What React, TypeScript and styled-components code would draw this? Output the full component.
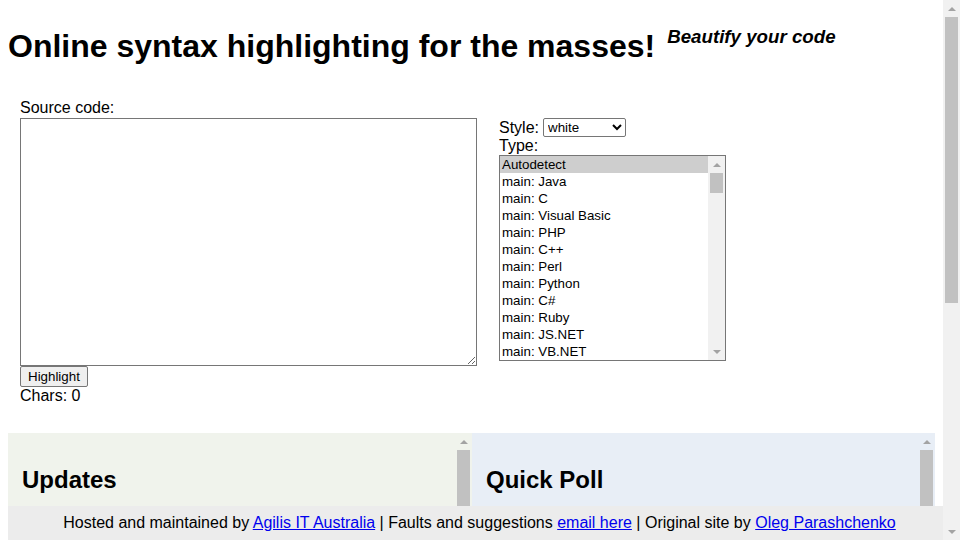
import React, { useState } from "react";
import styled, { createGlobalStyle } from "styled-components";

const GlobalStyle = createGlobalStyle`
  body {
    margin: 8px;
    background: #ffffff;
    color: #000000;
    font-family: "Liberation Sans", Arial, sans-serif;
    font-size: 16px;
  }
`;

// scrollbar parts, drawn by hand since the browser hides its own
const ScrollTrack = styled.div<{ $bg?: string }>`
  display: flex;
  flex-direction: column;
  flex: 0 0 17px;
  width: 17px;
  background: ${(p) => p.$bg || "#f1f1f1"};
`;

const ArrowButton = styled.div`
  flex: 0 0 17px;
  display: flex;
  align-items: center;
  justify-content: center;
`;

const Arrow = styled.span<{ $down?: boolean }>`
  width: 0;
  height: 0;
  border-left: 4px solid transparent;
  border-right: 4px solid transparent;
  ${(p) =>
    p.$down
      ? "border-top: 4px solid #a3a3a3;"
      : "border-bottom: 4px solid #a3a3a3;"}
`;

const Thumb = styled.div<{ $size: number }>`
  flex: 0 0 ${(p) => p.$size}px;
  margin: 0 2px;
  background: #c1c1c1;
`;

const TrackGap = styled.div`
  flex: 1;
`;

const PageScrollbar = styled(ScrollTrack)`
  position: fixed;
  top: 0;
  right: 0;
  bottom: 0;
  z-index: 2;
`;

const Scrollbar: React.FC<{ thumb: number; bg?: string }> = ({ thumb, bg }) => (
  <ScrollTrack $bg={bg}>
    <ArrowButton>
      <Arrow />
    </ArrowButton>
    <Thumb $size={thumb} />
    <TrackGap />
    <ArrowButton>
      <Arrow $down />
    </ArrowButton>
  </ScrollTrack>
);

const Header = styled.div`
  display: flex;
  align-items: flex-start;
  gap: 12px;
`;

const Title = styled.h1`
  font-size: 32px;
  font-weight: bold;
  margin: 20px 0 21px;
  white-space: nowrap;
`;

const Tagline = styled.h3`
  font-size: 18.72px;
  font-style: italic;
  font-weight: bold;
  margin: 18px 0;
`;

const Main = styled.div`
  display: flex;
  align-items: flex-start;
  gap: 22px;
  padding: 13px 0 0 12px;
`;

const SourceColumn = styled.div`
  display: flex;
  flex-direction: column;
`;

const Label = styled.span`
  line-height: 18px;
`;

const CodeArea = styled.textarea`
  display: block;
  box-sizing: border-box;
  width: 457px;
  height: 248px;
  margin: 1px 0 0;
  border: 1px solid #767676;
  border-radius: 0;
  font-family: "Liberation Mono", monospace;
  font-size: 13px;
`;

const HighlightButton = styled.button`
  align-self: flex-start;
  height: 21px;
  padding: 0 7px;
  margin: 0;
  font-family: "Liberation Sans", Arial, sans-serif;
  font-size: 13.33px;
  color: #000000;
  background: #efefef;
  border: 1px solid #767676;
  border-radius: 2px;
`;

const OptionsColumn = styled.div`
  display: flex;
  flex-direction: column;
  margin-top: 19px;
`;

const StyleRow = styled.div`
  display: flex;
  align-items: center;
  gap: 4px;
  height: 19px;
`;

const StyleSelect = styled.select`
  width: 83px;
  height: 19px;
  padding: 0;
  font-family: "Liberation Sans", Arial, sans-serif;
  font-size: 13.33px;
  color: #000000;
  background: #ffffff;
  border: 1px solid #767676;
  border-radius: 2px;
`;

const TypeList = styled.div`
  display: flex;
  width: 227px;
  height: 206px;
  box-sizing: border-box;
  border: 1px solid #767676;
  background: #ffffff;
`;

const TypeOptions = styled.div`
  flex: 1;
  overflow: hidden;
`;

const TypeOption = styled.div<{ $selected?: boolean }>`
  height: 17px;
  line-height: 17px;
  padding: 0 2px;
  font-size: 13.33px;
  white-space: nowrap;
  cursor: default;
  background: ${(p) => (p.$selected ? "#cecece" : "transparent")};
`;

const Panels = styled.div`
  display: grid;
  grid-template-columns: 464px 463px;
  margin-top: 28px;
`;

const Panel = styled.div<{ $tint: string }>`
  display: flex;
  height: 500px;
  overflow: hidden;
  background: ${(p) => p.$tint};
`;

const PanelBody = styled.div`
  flex: 1;
  padding: 13px 14px;
`;

const PanelTitle = styled.h2`
  font-size: 24px;
  margin: 20px 0;
`;

const Footer = styled.div`
  position: fixed;
  left: 8px;
  right: 17px;
  bottom: 0;
  height: 34px;
  line-height: 34px;
  padding-left: 8px;
  text-align: center;
  background: #ececec;
  z-index: 1;

  a {
    color: #0000ee;
  }
`;

const mainTypes = [
  "Java", "C", "Visual Basic", "PHP", "C++", "Perl", "Python", "C#", "Ruby",
  "JS.NET", "VB.NET",
];

const styles = ["white", "dark", "blue", "green", "print"];

const App: React.FC = () => {
  const [source, setSource] = useState("");
  const [type, setType] = useState("Autodetect");

  const types = ["Autodetect", ...mainTypes.map((t) => "main: " + t)];

  return (
    <>
      <GlobalStyle />
      <Header>
        <Title>Online syntax highlighting for the masses!</Title>
        <Tagline>Beautify your code</Tagline>
      </Header>

      <Main>
        <SourceColumn>
          <Label>Source code:</Label>
          <CodeArea
            value={source}
            onChange={(e) => setSource(e.target.value)}
          />
          <HighlightButton>Highlight</HighlightButton>
          <Label>Chars: {source.length}</Label>
        </SourceColumn>

        <OptionsColumn>
          <StyleRow>
            <Label>Style:</Label>
            <StyleSelect defaultValue="white">
              {styles.map((s) => (
                <option key={s}>{s}</option>
              ))}
            </StyleSelect>
          </StyleRow>
          <Label>Type:</Label>
          <TypeList role="listbox">
            <TypeOptions>
              {types.map((t) => (
                <TypeOption
                  key={t}
                  role="option"
                  $selected={t === type}
                  onClick={() => setType(t)}
                >
                  {t}
                </TypeOption>
              ))}
            </TypeOptions>
            <Scrollbar thumb={20} />
          </TypeList>
        </OptionsColumn>
      </Main>

      <Panels>
        <Panel $tint="#f0f3ec">
          <PanelBody>
            <PanelTitle>Updates</PanelTitle>
          </PanelBody>
          <Scrollbar thumb={360} bg="transparent" />
        </Panel>
        <Panel $tint="#e8eef6">
          <PanelBody>
            <PanelTitle>Quick Poll</PanelTitle>
          </PanelBody>
          <Scrollbar thumb={360} bg="transparent" />
        </Panel>
      </Panels>

      <Footer>
        Hosted and maintained by <a href="#">Agilis IT Australia</a> | Faults
        and suggestions <a href="#">email here</a> | Original site by{" "}
        <a href="#">Oleg Parashchenko</a>
      </Footer>

      <PageScrollbar>
        <ArrowButton>
          <Arrow />
        </ArrowButton>
        <Thumb $size={286} />
        <TrackGap />
        <ArrowButton>
          <Arrow $down />
        </ArrowButton>
      </PageScrollbar>
    </>
  );
};

export default App;
